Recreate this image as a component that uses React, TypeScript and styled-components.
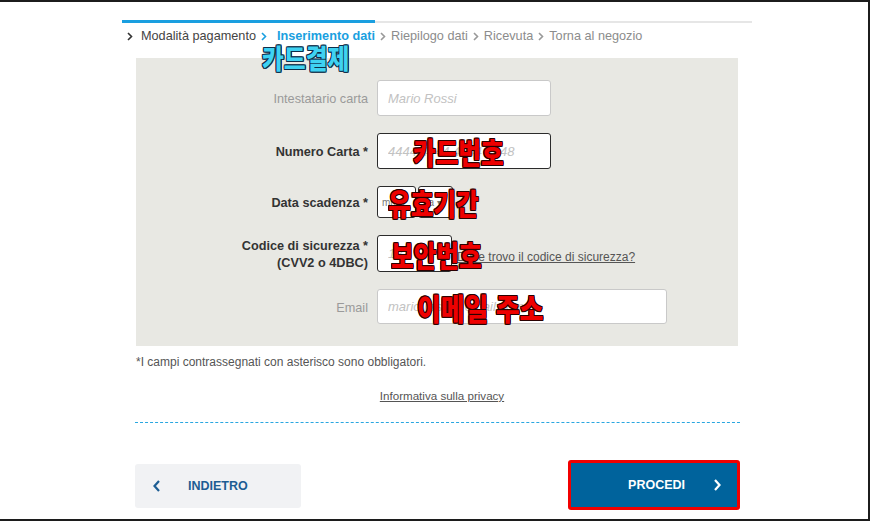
import React from "react";
import styled, { createGlobalStyle } from "styled-components";

const Global = createGlobalStyle`
  html, body { margin: 0; padding: 0; background: #fff; }
  body { font-family: "Liberation Sans", Arial, sans-serif; }
  * { box-sizing: border-box; }
`;

const Page = styled.div`
  width: 870px;
  height: 521px;
  border-top: 2px solid #1c1c1c;
  border-right: 2px solid #1c1c1c;
  border-bottom: 2px solid #1c1c1c;
  overflow: hidden;
  background: #fff;
`;

const Wrapper = styled.div`
  position: relative;
  margin-left: 122px;
  width: 630px;
  display: flex;
  flex-direction: column;
`;

const Progress = styled.div`
  margin-top: 18px;
  height: 3px;
  display: flex;
  align-items: flex-start;
`;

const ProgressDone = styled.div`
  width: 253px;
  height: 3px;
  background: #1a9fe0;
`;

const ProgressRest = styled.div`
  flex: 1;
  height: 2px;
  margin-top: 1px;
  background: #e6e6e6;
`;

const Crumbs = styled.div`
  margin-top: 4px;
  height: 18px;
  display: flex;
  align-items: center;
  font-size: 12.7px;
`;

const Step = styled.span<{ $state: "done" | "active" | "todo" }>`
  color: ${(p) => (p.$state === "active" ? "#1a9fe0" : p.$state === "done" ? "#444" : "#8c8c8c")};
  font-weight: ${(p) => (p.$state === "active" ? "bold" : "normal")};
  padding-left: ${(p) => (p.$state === "active" ? 5 : p.$state === "done" ? 3 : 0)}px;
  white-space: nowrap;
`;

const ChevronBox = styled.span<{ $color: string }>`
  display: inline-flex;
  margin: 0 5px;
  color: ${(p) => p.$color};
`;

const Chevron = ({ color }: { color: string }) => (
  <ChevronBox $color={color}>
    <svg width="6" height="9" viewBox="0 0 6 9">
      <polyline points="1,1 4.5,4.5 1,8" fill="none" stroke="currentColor" strokeWidth="1.6" />
    </svg>
  </ChevronBox>
);

const Annot = styled.span<{ $fill: string; $edge: string; $size: number; $sx: number }>`
  position: absolute;
  display: inline-block;
  font-family: "Noto Sans CJK KR", sans-serif;
  font-weight: 900;
  font-size: ${(p) => p.$size}px;
  line-height: 1;
  word-spacing: 2px;
  color: ${(p) => p.$fill};
  white-space: nowrap;
  transform: scaleX(${(p) => p.$sx});
  transform-origin: left center;
  pointer-events: none;
  text-shadow:
    1px 0 0 ${(p) => p.$edge}, -1px 0 0 ${(p) => p.$edge},
    0 1px 0 ${(p) => p.$edge}, 0 -1px 0 ${(p) => p.$edge},
    1px 1px 0 ${(p) => p.$edge}, -1px -1px 0 ${(p) => p.$edge},
    1px -1px 0 ${(p) => p.$edge}, -1px 1px 0 ${(p) => p.$edge};
`;

const TitleAnnot = styled(Annot)`
  left: 140px;
  top: 42px;
`;

const Panel = styled.div`
  margin: 13px 14px 0;
  background: #e8e8e3;
  padding: 22px 0 22px;
  display: flex;
  flex-direction: column;
  gap: 17px;
`;

const Row = styled.div<{ $h: number; $mt?: number }>`
  display: grid;
  grid-template-columns: 232px 1fr;
  column-gap: 9px;
  align-items: center;
  height: ${(p) => p.$h}px;
  margin-top: ${(p) => p.$mt ?? 0}px;
`;

const Label = styled.label<{ $required?: boolean }>`
  text-align: right;
  font-size: 12.7px;
  line-height: 17px;
  padding-top: 3px;
  color: ${(p) => (p.$required ? "#333" : "#9a9a9a")};
  font-weight: ${(p) => (p.$required ? "bold" : "normal")};
`;

const Field = styled.div`
  position: relative;
  display: flex;
  align-items: center;
  height: 100%;
  gap: 2px;
`;

const Input = styled.input<{ $w: number; $dark?: boolean }>`
  width: ${(p) => p.$w}px;
  height: 100%;
  border: 1px solid ${(p) => (p.$dark ? "#2b2b2b" : "#c9c9c9")};
  border-radius: 3px;
  background: #fff;
  padding: 0 10px;
  font-family: "Liberation Sans", Arial, sans-serif;
  font-size: 13px;
  outline: none;
  &::placeholder {
    color: #c2c2c2;
    font-style: italic;
  }
`;

const SmallInput = styled(Input)`
  padding: 0 4px;
  font-size: 10px;
  &::placeholder {
    color: #777;
    font-style: normal;
  }
`;

const HelpLink = styled.a`
  margin-left: 3px;
  margin-top: 6px;
  font-size: 12px;
  color: #555;
  text-decoration: underline;
  white-space: nowrap;
`;

const RedAnnot = styled(Annot)`
  top: 50%;
  margin-top: -15px;
`;

const Note = styled.p`
  margin: 8px 0 0 14px;
  font-size: 12px;
  line-height: 16px;
  color: #555;
`;

const Privacy = styled.a`
  align-self: center;
  margin-top: 18px;
  margin-left: 10px;
  font-size: 11.6px;
  line-height: 16px;
  color: #555;
  text-decoration: underline;
`;

const Dashed = styled.hr`
  margin: 18px 12px 0 13px;
  border: 0;
  border-top: 1px dashed #2aa7e0;
  height: 0;
`;

const Actions = styled.div`
  margin: 37px 12px 0 13px;
  display: flex;
  justify-content: space-between;
  align-items: center;
`;

const BackButton = styled.button`
  width: 166px;
  height: 44px;
  margin-top: 2px;
  border: 0;
  border-radius: 3px;
  background: #f1f2f4;
  display: flex;
  align-items: center;
  padding: 0 0 0 18px;
  gap: 27px;
  color: #1d5d93;
  font-family: "Liberation Sans", Arial, sans-serif;
  font-weight: bold;
  font-size: 12.5px;
  cursor: pointer;
`;

const Highlight = styled.div`
  border: 3px solid #f20000;
  border-radius: 3px;
  padding: 0;
  display: flex;
`;

const NextButton = styled.button`
  width: 166px;
  height: 44px;
  border: 0;
  background: #00639c;
  display: flex;
  align-items: center;
  justify-content: flex-end;
  padding: 0 16px 0 0;
  gap: 28px;
  color: #fff;
  font-family: "Liberation Sans", Arial, sans-serif;
  font-weight: bold;
  font-size: 12.5px;
  cursor: pointer;
`;

const Arrow = ({ dir }: { dir: "left" | "right" }) => (
  <svg width="8" height="12" viewBox="0 0 8 12">
    <polyline
      points={dir === "left" ? "6,1 1.5,6 6,11" : "2,1 6.5,6 2,11"}
      fill="none"
      stroke="currentColor"
      strokeWidth="2.2"
    />
  </svg>
);

const red = { $fill: "#ee0000", $edge: "#2a0000", $size: 30, $sx: 0.82 };

export default function App() {
  return (
    <>
      <Global />
      <Page>
        <Wrapper>
          <Progress>
            <ProgressDone />
            <ProgressRest />
          </Progress>
          <Crumbs>
            <Chevron color="#333" />
            <Step $state="done">Modalità pagamento</Step>
            <Chevron color="#1a9fe0" />
            <Step $state="active">Inserimento dati</Step>
            <Chevron color="#999" />
            <Step $state="todo">Riepilogo dati</Step>
            <Chevron color="#999" />
            <Step $state="todo">Ricevuta</Step>
            <Chevron color="#999" />
            <Step $state="todo">Torna al negozio</Step>
          </Crumbs>
          <TitleAnnot $fill="#3fd2f2" $edge="#0e2f4a" $size={27} $sx={0.88}>
            카드결제
          </TitleAnnot>

          <Panel>
            <Row $h={36}>
              <Label>Intestatario carta</Label>
              <Field>
                <Input $w={174} placeholder="Mario Rossi" />
              </Field>
            </Row>
            <Row $h={36}>
              <Label $required>Numero Carta *</Label>
              <Field>
                <Input $w={174} $dark placeholder="4444 4444 4444 4448" />
                <RedAnnot {...red} style={{ left: 36 }}>
                  카드번호
                </RedAnnot>
              </Field>
            </Row>
            <Row $h={32}>
              <Label $required>Data scadenza *</Label>
              <Field>
                <SmallInput $w={39} $dark placeholder="mm ▾" />
                <SmallInput $w={35} $dark placeholder="aa ▾" />
                <RedAnnot {...red} style={{ left: 11 }}>
                  유효기간
                </RedAnnot>
              </Field>
            </Row>
            <Row $h={36}>
              <Label $required>
                Codice di sicurezza *
                <br />
                (CVV2 o 4DBC)
              </Label>
              <Field>
                <Input $w={75} $dark placeholder="123" />
                <HelpLink>Dove trovo il codice di sicurezza?</HelpLink>
                <RedAnnot {...red} style={{ left: 14 }}>
                  보안번호
                </RedAnnot>
              </Field>
            </Row>
            <Row $h={35} $mt={1}>
              <Label>Email</Label>
              <Field>
                <Input $w={290} placeholder="mario.rossi@email.com" />
                <RedAnnot {...red} $sx={0.86} style={{ left: 40 }}>
                  이메일 주소
                </RedAnnot>
              </Field>
            </Row>
          </Panel>

          <Note>*I campi contrassegnati con asterisco sono obbligatori.</Note>
          <Privacy>Informativa sulla privacy</Privacy>
          <Dashed />

          <Actions>
            <BackButton>
              <Arrow dir="left" />
              INDIETRO
            </BackButton>
            <Highlight>
              <NextButton>
                PROCEDI
                <Arrow dir="right" />
              </NextButton>
            </Highlight>
          </Actions>
        </Wrapper>
      </Page>
    </>
  );
}
